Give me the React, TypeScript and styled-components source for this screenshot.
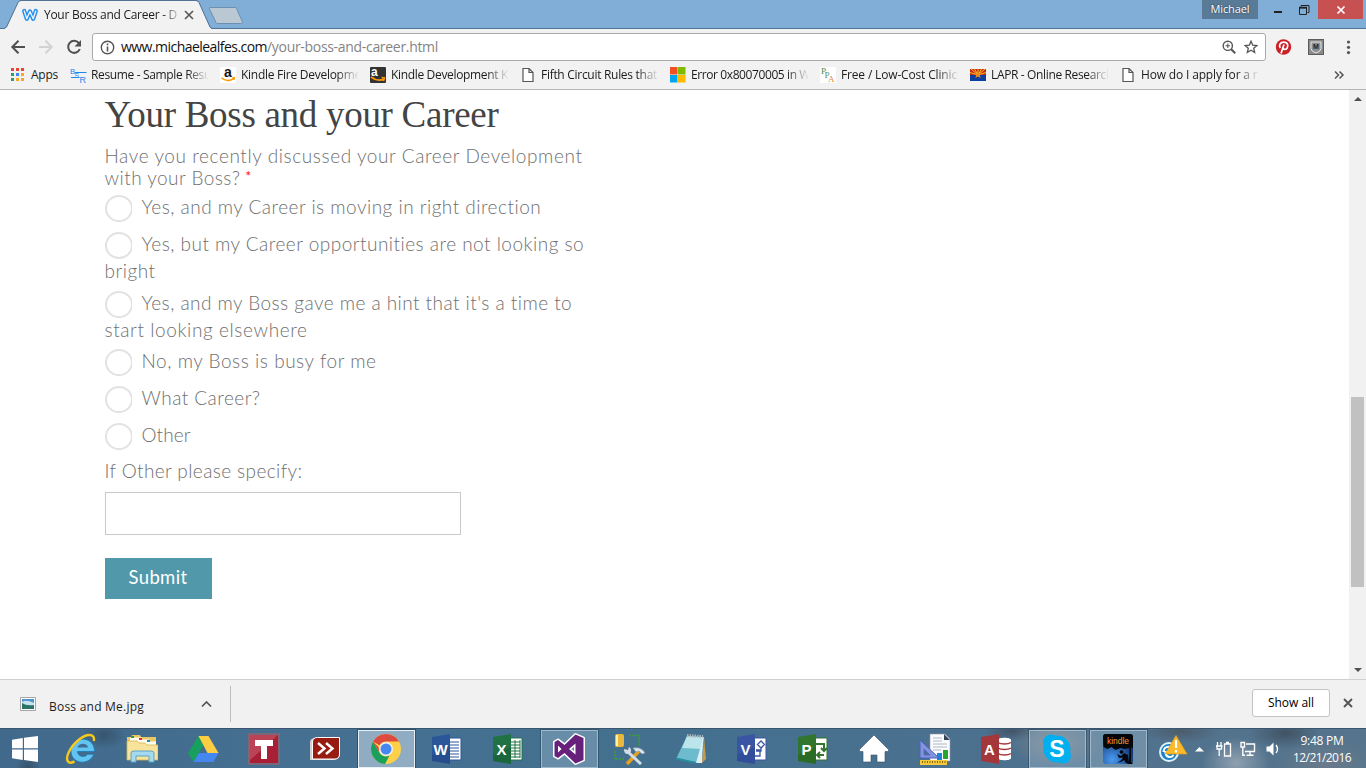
import React, { useLayoutEffect, useRef, useState } from 'react';
import styled, { createGlobalStyle, css } from 'styled-components';

const Global = createGlobalStyle`
  *, *::before, *::after { box-sizing: border-box; }
  body { margin: 0; background: #fff; overflow: hidden; }
`;

const uiFont = '"Open Sans", "Noto Sans", sans-serif';
const bodyFont = 'Lato, "Open Sans", sans-serif';
const iconFont = '"Liberation Sans", sans-serif';

/* ---------- text whose tracking is adjusted to a measured width ---------- */

const Track = styled.span`
  display: inline-block;
  white-space: pre;
`;

function Fit({ w, children }: { w: number; children: string }) {
  const ref = useRef<HTMLSpanElement>(null);
  const [gap, setGap] = useState(0);
  useLayoutEffect(() => {
    if (ref.current) {
      const natural = ref.current.getBoundingClientRect().width - gap * children.length;
      setGap((w - natural) / children.length);
    }
  }, [w, children]);
  return (
    <Track ref={ref} style={{ letterSpacing: `${gap}px` }}>
      {children}
    </Track>
  );
}

/* ---------- window ---------- */

const Screen = styled.div`
  width: 1366px;
  height: 768px;
  display: flex;
  flex-direction: column;
  overflow: hidden;
  background: #fff;
  font-family: ${uiFont};
  font-size: 12px;
  color: #1c1c1c;
  svg { display: block; flex: none; }
`;

const TitleBar = styled.header`
  height: 29px;
  flex: none;
  display: flex;
  align-items: flex-start;
  background: #80aed6;
  border-bottom: 1px solid #4e7195;
`;

const Tab = styled.div`
  position: relative;
  width: 208px;
  height: 29px;
  margin-left: 4px;
  display: flex;
  align-items: center;
  padding: 1px 0 0 18px;
`;

const TabShape = styled.svg`
  position: absolute;
  left: 0;
  top: 0;
`;

const TabTitle = styled.div`
  position: relative;
  width: 134px;
  margin-left: 6px;
  overflow: hidden;
  line-height: 18px;
  mask-image: linear-gradient(to right, #000 118px, transparent 138px);
`;

const Above = styled.div`
  position: relative;
`;

const NewTab = styled.div`
  margin: 6px auto 0 -4px;
`;

const Profile = styled.div`
  width: 56px;
  height: 19px;
  background: #5a7b97;
  color: #fff;
  font-size: 11px;
  line-height: 18px;
  text-align: center;
  text-shadow: 0 0 2px #203040;
`;

const WindowButton = styled.div<{ $close?: boolean; $w: number }>`
  width: ${p => p.$w}px;
  height: 19px;
  display: flex;
  align-items: center;
  justify-content: center;
  background: ${p => (p.$close ? '#c75050' : 'transparent')};
  margin-right: ${p => (p.$close ? 3 : 0)}px;
`;

const RestoreButton = styled(WindowButton)`
  justify-content: flex-start;
`;

const Toolbar = styled.div`
  height: 32px;
  flex: none;
  display: flex;
  align-items: center;
  padding: 4px 0 0 10px;
  background: #f2f2f2;
`;

const ToolIcon = styled.div<{ $gap: number }>`
  margin-right: ${p => p.$gap}px;
`;

const Omnibox = styled.div`
  width: 1174px;
  height: 28px;
  display: flex;
  align-items: center;
  padding: 0 7px;
  background: #fff;
  border: 1px solid #a9a9a9;
  border-radius: 3px;
  font-size: 14px;
  color: #111;
`;

const Url = styled.div`
  display: flex;
  flex: 1;
  margin-left: 6px;
  line-height: 20px;
`;

const Path = styled.span`
  color: #848484;
`;

const Bookmarks = styled.nav`
  height: 29px;
  flex: none;
  display: flex;
  align-items: center;
  padding-left: 10px;
  background: #f2f2f2;
  border-bottom: 1px solid #b6b6b6;
`;

const AppsLink = styled.div`
  width: 60px;
  display: flex;
  align-items: center;
  gap: 7px;
  line-height: 18px;
`;

const Bookmark = styled.div`
  width: 150px;
  height: 18px;
  display: flex;
  align-items: center;
  gap: 5px;
  line-height: 18px;
`;

const BookmarkIcon = styled.div`
  width: 16px;
`;

const BookmarkName = styled.div`
  width: 117px;
  overflow: hidden;
  mask-image: linear-gradient(to right, #000 96px, transparent 118px);
`;

/* ---------- page ---------- */

const Viewport = styled.div`
  height: 589px;
  flex: none;
  display: flex;
  justify-content: space-between;
`;

const Form = styled.main`
  width: 600px;
  padding: 3px 0 0 104.5px;
  font-family: ${bodyFont};
  font-size: 19px;
  font-weight: 300;
  color: #707070;
`;

const Heading = styled.h1`
  margin: 0;
  height: 52px;
  font: 400 37px/43px "Liberation Serif", serif;
  color: #444;
`;

const Line = styled.div`
  height: 22px;
  line-height: 22px;
  display: flex;
`;

const Required = styled.span`
  margin-left: 5px;
  font-size: 13px;
  font-weight: 700;
  line-height: 19px;
  color: #f33;
`;

const Options = styled.div`
  margin-top: 6px;
`;

const Option = styled.div`
  padding-bottom: 9px;
`;

const OptionRow = styled.label`
  height: 28px;
  display: flex;
  gap: 10px;
  line-height: 24px;
`;

const Wrapped = styled.div`
  height: 21.5px;
  line-height: 22px;
`;

const RadioBox = styled.span`
  width: 27px;
  height: 28px;
  flex: none;
  overflow: hidden;
`;

const Radio = styled.span`
  display: block;
  width: 28px;
  height: 27px;
  border: 2px solid #e2e2e2;
  border-radius: 50%;
  background: #fff;
`;

const TextInput = styled.div`
  width: 356px;
  height: 43px;
  margin-top: 10px;
  border: 1px solid #c9c9c9;
  background: #fff;
`;

const Submit = styled.button`
  display: block;
  width: 107px;
  height: 41px;
  margin-top: 23px;
  padding: 0 0 3px;
  border: 0;
  background: #5199aa;
  color: #fff;
  font: 400 18.5px/38px ${bodyFont};
`;

const Scrollbar = styled.div`
  width: 17px;
  display: flex;
  flex-direction: column;
  align-items: center;
  background: #f1f1f1;
`;

const Arrow = styled.div<{ $down?: boolean }>`
  width: 0;
  height: 0;
  margin: ${p => (p.$down ? 'auto 0 7px' : '7px 0 0')};
  border: 4px solid transparent;
  ${p =>
    p.$down
      ? css`border-top-color: #505050; border-bottom: 0;`
      : css`border-bottom-color: #505050; border-top: 0;`}
`;

const Thumb = styled.div`
  width: 13px;
  height: 190px;
  margin-top: 296px;
  background: #c1c1c1;
`;

/* ---------- download shelf ---------- */

const Shelf = styled.div`
  height: 49px;
  flex: none;
  display: flex;
  align-items: center;
  background: #f1f1f1;
  border-top: 1px solid #d0d0d0;
`;

const Download = styled.div`
  width: 231px;
  height: 36px;
  display: flex;
  align-items: center;
  padding: 0 18px 0 20px;
  border-right: 1px solid #bdbdbd;
`;

const FileName = styled.div`
  flex: 1;
  margin: 5px 0 0 13px;
  line-height: 18px;
`;

const ShowAll = styled.button`
  width: 78px;
  height: 28px;
  margin: 0 13px 2px auto;
  padding: 0;
  border: 1px solid #c3c3c3;
  border-radius: 3px;
  background: #fff;
  color: #000;
  font: 500 12px/24px ${uiFont};
`;

const ShelfClose = styled.div`
  margin: 0 13px 2px 0;
`;

/* ---------- task bar ---------- */

const TaskBar = styled.footer`
  height: 40px;
  flex: none;
  display: flex;
  align-items: center;
  border-top: 1px solid #3a566e;
  background:
    radial-gradient(ellipse 22px 14px at 104px 6px, rgba(40, 58, 72, 0.45), transparent),
    radial-gradient(ellipse 12px 14px at 28px 38px, rgba(40, 58, 72, 0.5), transparent),
    radial-gradient(ellipse 45px 24px at 1055px 14px, rgba(126, 130, 134, 0.9), transparent),
    radial-gradient(ellipse 28px 10px at 1012px 2px, rgba(60, 66, 76, 0.6), transparent),
    radial-gradient(ellipse 34px 26px at 1236px 34px, rgba(150, 166, 180, 0.9), transparent),
    radial-gradient(ellipse 36px 16px at 1285px 4px, rgba(58, 72, 86, 0.75), transparent),
    radial-gradient(ellipse 40px 12px at 1180px 2px, rgba(74, 85, 96, 0.75), transparent),
    radial-gradient(ellipse 50px 24px at 1325px 34px, rgba(110, 124, 138, 0.85), transparent),
    linear-gradient(to right, #41698b 0, #457092 300px, #44708f 700px, #4c718f 1000px, #56748c 1366px);
`;

const Start = styled.div`
  width: 53px;
  padding-left: 12px;
`;

const Task = styled.div<{ $state?: 'open' | 'active' }>`
  width: 57px;
  height: 38px;
  margin-right: 4px;
  padding-right: 1px;
  display: flex;
  align-items: center;
  justify-content: center;
  border: 1px solid transparent;
  ${p => p.$state === 'open' && css`
    border-color: rgba(205, 220, 232, 0.55);
    background: rgba(170, 195, 215, 0.35);
    box-shadow: 0 0 0 1px rgba(35, 60, 82, 0.5);
  `}
  ${p => p.$state === 'active' && css`
    border-color: #e8eff5;
    background: rgba(195, 212, 226, 0.6);
    box-shadow: 0 0 0 1px rgba(35, 60, 82, 0.6);
  `}
`;

const Tray = styled.div`
  flex: 1;
  display: flex;
  align-items: center;
  padding-left: 7px;
`;

const TrayItem = styled.div<{ $w: number }>`
  width: ${p => p.$w}px;
`;

const Clock = styled.div`
  width: 62px;
  margin-left: 2px;
  text-align: center;
  font-size: 12px;
  line-height: 17px;
  color: #fff;
`;

const ClockLine = styled.div``;

/* ---------- drawings ---------- */

const PageIcon = () => (
  <svg width="16" height="16" viewBox="0 0 16 16" fill="#fff" stroke="#555" strokeWidth="1.2">
    <path d="M3 1.5h6l4 4v9H3z M9 1.5v4h4" />
  </svg>
);

const bookmarks: { name: string; w: number; icon: React.ReactNode }[] = [
  {
    name: 'Resume - Sample Resu', w: 120,
    icon: (
      <svg width="17" height="16" viewBox="0 0 17 16" fill="#1e88f0" fontFamily={iconFont}>
        <path d="M5 5.5h11.500M1 10.500h8.500" stroke="#1e88f0" strokeWidth="1" />
        <text x="0" y="6.500" fontSize="8">B</text>
        <text x="4.500" y="11" fontSize="7">S</text>
        <text x="9.500" y="15.500" fontSize="9">R</text>
      </svg>
    ),
  },
  {
    name: 'Kindle Fire Developme', w: 120,
    icon: (
      <svg width="16" height="16" viewBox="0 0 16 16">
        <rect width="16" height="16" rx="2" fill="#fff" />
        <text x="4" y="10" fontSize="14" fontWeight="700" fill="#111" fontFamily={iconFont}>a</text>
        <path d="M1.500 10.800c3.500 3.300 8.500 3.500 12 .8M12.300 10.900l2-.2-.5 2.200" fill="none" stroke="#f90" strokeWidth="1.500" />
      </svg>
    ),
  },
  {
    name: 'Kindle Development K', w: 117,
    icon: (
      <svg width="16" height="16" viewBox="0 0 16 16">
        <rect width="16" height="16" rx="1" fill="#333" />
        <text x="1" y="8.500" fontSize="12" fontWeight="700" fill="#fff" fontFamily={iconFont}>a</text>
        <path d="M1 10c4 3 9 4 13 2M11.500 10.500l3 .5-1 3" fill="none" stroke="#f90" strokeWidth="1.600" />
      </svg>
    ),
  },
  { name: 'Fifth Circuit Rules that', w: 116, icon: <PageIcon /> },
  {
    name: 'Error 0x80070005 in W', w: 119,
    icon: (
      <svg width="16" height="16" viewBox="0 0 16 16">
        <path fill="#f25022" d="M0 0h7.500v7.500H0z" />
        <path fill="#7fba00" d="M8 0h7.500v7.500H8z" />
        <path fill="#00a4ef" d="M0 8h7.500v7.500H0z" />
        <path fill="#ffb900" d="M8 8h7.500v7.500H8z" />
      </svg>
    ),
  },
  {
    name: 'Free / Low-Cost Clinic', w: 116,
    icon: (
      <svg width="16" height="16" viewBox="0 0 16 16" fontFamily="Liberation Serif, serif">
        <path fill="#fff" d="M0 0h16v16H0z" />
        <text x="1" y="7" fontSize="9" fill="#4d8a50">P</text>
        <text x="4.500" y="11" fontSize="9" fill="#5c9560">P</text>
        <text x="8" y="14.500" fontSize="9" fill="#e58a35">A</text>
      </svg>
    ),
  },
  {
    name: 'LAPR - Online Research', w: 122,
    icon: (
      <svg width="16" height="16" viewBox="0 0 16 16">
        <path fill="#c22a18" d="M0 2h16v6H0z" />
        <path stroke="#fb2" strokeWidth="1" d="M8 8L1 2M8 8L4.500 2M8 8l7-6M8 8l3.500-6M8 8L0 5.500M8 8l8-2.500M8 8V2" />
        <path fill="#0c3f9e" d="M0 8h16v6H0z" />
        <path fill="#e88a20" d="M8 4l1.200 2.600 2.800.1-2.200 1.600.8 2.700L8 9.500 5.400 11l.8-2.700L4 6.700l2.800-.1z" />
      </svg>
    ),
  },
  { name: 'How do I apply for a n', w: 119, icon: <PageIcon /> },
];

const AppsGrid = () => (
  <svg width="14" height="14" viewBox="0 0 14 14">
    {['#ea4335', '#ea4335', '#ea4335', '#2ca05a', '#4285f4', '#f9a825', '#2ca05a', '#f9a825', '#f9a825'].map((c, i) => (
      <rect key={i} x={1 + (i % 3) * 5} y={Math.floor(i / 3) * 5} width="3" height="3" fill={c} />
    ))}
  </svg>
);

const Letter = ({ children }: { children: string }) => (
  <text x="9.500" y="21.500" fontSize="15" fontWeight="700" textAnchor="middle" fill="#fff" fontFamily={iconFont}>{children}</text>
);

const Office = ({ letter, color, dark, children }: { letter: string; color: string; dark: string; children: React.ReactNode }) => (
  <svg width="32" height="32" viewBox="0 0 32 32">
    <path d="M17 5h13v22H17z" fill="#fff" stroke={color} strokeWidth="1" />
    {children}
    <path d="M1 4l18-3v30L1 28z" fill={color} />
    <path d="M1 22l18-8v17L1 28z" fill={dark} opacity=".35" />
    <Letter>{letter}</Letter>
  </svg>
);

const IE = () => (
  <svg width="32" height="32" viewBox="0 0 32 32">
    <path d="M29.500 18.500H12.500c.3 5.500 7.500 6.500 10 2.800h6.300C24.500 33 5.500 31.500 6 17.500 6.500 3 29.500 1.500 29.500 18.500z" fill="#62c5f1" stroke="#1d79b8" strokeWidth=".8" />
    <path d="M12.500 14.500c.8-5 10-5 10.500 0z" fill="#3f6f93" />
    <path d="M28.800 8C30.500 .5 22 0 13.500 7 4.500 14.500-.5 25.500 3.500 29c1.500 1.200 4 .6 6-.6" fill="none" stroke="#f8c81c" strokeWidth="2.400" />
  </svg>
);

const Explorer = () => (
  <svg width="32" height="32" viewBox="0 0 32 32">
    <path d="M1 4h4l1-2h8l1 2h15v23H1z" fill="#e9c765" />
    <path d="M4 4.500h11v5H4zM12 6.500h11v5H12zM20 8.500h10v5H20z" fill="#fffdf0" />
    <path d="M5 3h3v2H5z" fill="#2c9c38" /><path d="M13 5h3v2h-3z" fill="#d33" /><path d="M21 7h3v2h-3z" fill="#28c" />
    <path d="M1 8h10l2 2h6l2 2h11v15H1z" fill="#f7e39a" stroke="#d9b44e" strokeWidth=".8" />
    <path d="M5 29V20q0-2 3-2h17q3 0 3 2v9h-5v-6H10v6z" fill="#a4d9ee" stroke="#5aa5c8" strokeWidth="1" />
  </svg>
);

const Drive = () => (
  <svg width="32" height="32" viewBox="0 0 32 32">
    <path d="M11.500 3L1 20l5.500 9L16.500 12z" fill="#17a05d" />
    <path d="M11.500 3h10L31.500 20h-11z" fill="#ffcd42" />
    <path d="M11.800 20h19.700l-5 9H6.500z" fill="#4587f0" />
  </svg>
);

const Trend = () => (
  <svg width="32" height="32" viewBox="0 0 32 32">
    <path d="M1 1h30v30H1z" fill="#a82035" stroke="#7d6678" strokeWidth="2" />
    <path d="M2 2h28L2 27z" fill="#c25464" opacity=".7" />
    <path d="M7 7h18v6h-6v13h-6V13H7z" fill="#fff" />
  </svg>
);

const Remote = () => (
  <svg width="32" height="32" viewBox="0 0 32 32">
    <path d="M1 9q0-3 4-4h26v16q0 5-6 6H1z" fill="#d4cfd0" />
    <path d="M3.500 9q0-4.500 5-4.500h22V21q0 5-5 5h-22z" fill="#971b10" stroke="#fff" strokeWidth="1" />
    <path d="M9 10l6.500 5.500L9 21M17 10l6.500 5.500L17 21" fill="none" stroke="#fff" strokeWidth="2.400" />
  </svg>
);

const Chrome = () => (
  <svg width="32" height="32" viewBox="0 0 32 32">
    <circle cx="16" cy="16" r="15" fill="#fdd047" />
    <path d="M3 8.500A15 15 0 0 1 29 8.500H16a7.500 7.500 0 0 0-6.500 3.800z" fill="#dd4b3e" />
    <path d="M3 8.500l6.500 11.200A7.500 7.500 0 0 0 19.500 22.600L15 31A15 15 0 0 1 3 8.500z" fill="#1ba05c" />
    <path d="M3 8.500L9.500 19.700 8.500 14z" fill="#dd4b3e" />
    <circle cx="16" cy="16" r="7" fill="#f1f1f1" /><circle cx="16" cy="16" r="5.500" fill="#4688f1" />
  </svg>
);

const VisualStudio = () => (
  <svg width="34" height="34" viewBox="0 0 34 34">
    <g fillRule="evenodd" strokeLinejoin="round">
      <path id="vs" d="M23.500 2.500L31.500 6v22l-8 3.500L12.500 21 6 26l-3.500-2V10L6 8l6.500 5zM23.500 11.500L17 17l6.500 5.500zM6 13.500v7L9.500 17z" fill="#68217a" stroke="#fff" strokeWidth="3" />
      <path d="M23.500 2.500L31.500 6v22l-8 3.500L12.500 21 6 26l-3.500-2V10L6 8l6.500 5zM23.500 11.500L17 17l6.500 5.500zM6 13.500v7L9.500 17z" fill="#68217a" />
    </g>
  </svg>
);

const Tools = () => (
  <svg width="32" height="32" viewBox="0 0 32 32">
    <path d="M15 2.500h10v10M1 18v8h10" fill="none" stroke="#3f9a3a" strokeWidth="1.500" strokeDasharray="2 1" />
    <rect x="1" y="1" width="9" height="13" rx="2" fill="#e9b73b" /><path d="M3 2v11" stroke="#fff0a8" strokeWidth="2" />
    <path d="M13 31L25 18" stroke="#e8a020" strokeWidth="3.500" />
    <path d="M19 15c6-1 10 1 12 5l-3 1-3-3-3 1z" fill="#dbe4ea" stroke="#8797a3" strokeWidth=".6" />
    <path d="M14 19l13 12" stroke="#d4dde4" strokeWidth="3" />
    <path d="M10 16l4 1 1-3c3 2 3 6-1 7-3 0-4-2-4-5z" fill="#d4dde4" />
  </svg>
);

const Notepad = () => (
  <svg width="32" height="32" viewBox="0 0 32 32">
    <path d="M29 4l2 22-4 4z" fill="#c49a4a" />
    <path d="M12 3l17 1-3 26-25-4z" fill="#6cbccd" />
    <path d="M12 3l17 1-2 12-20-1z" fill="#c9ebf0" opacity=".85" />
    <path d="M28 5l-7 25h6z" fill="#dfeef2" />
    <path d="M1 25.500l20 4.500" stroke="#2b8ba0" strokeWidth="2" />
    <path d="M12 2.500l16 1" stroke="#a9b5b8" strokeWidth="3" strokeDasharray="1.500 1" />
  </svg>
);

const Home = () => (
  <svg width="32" height="32" viewBox="0 0 32 32">
    <path d="M16 2L1 17l1.500 1.500H5V29h8v-7h6v7h8V18.500h2.500L31 17z" fill="#fff" stroke="#36526a" strokeWidth=".6" />
  </svg>
);

const ReportBuilder = () => (
  <svg width="32" height="32" viewBox="0 0 32 32">
    <path d="M11 1h15l5 5v22H11z" fill="#fbfcfe" stroke="#99a" strokeWidth=".6" /><path d="M25 1v6h6z" fill="#34435a" />
    <path d="M14 5h9M14 8h9M14 11h14M14 14h14M14 17h8" stroke="#aeb6c2" />
    <path d="M18 20h5v7h-5z" fill="#1986dc" /><path d="M24 17h5v9h-5z" fill="#27a52d" />
    <path d="M1 7v18h19z" fill="#8394df" stroke="#4b5fbe" /><path d="M5 16v6h6z" fill="#4a6c94" stroke="#5668c0" />
    <path d="M1 27h27v5H1z" fill="#f6c93d" /><path d="M3 29h24" stroke="#84640e" strokeWidth="2" strokeDasharray="1 1.500" />
  </svg>
);

const Skype = () => (
  <svg width="32" height="32" viewBox="0 0 32 32">
    <circle cx="16" cy="16" r="13.500" fill="#00aff0" /><circle cx="10" cy="9.500" r="8" fill="#00aff0" /><circle cx="22" cy="22.500" r="8" fill="#00aff0" />
    <text x="16" y="24" textAnchor="middle" fontFamily={iconFont} fontWeight="700" fontSize="23" fill="#fff">S</text>
  </svg>
);

const Kindle = () => (
  <svg width="32" height="32" viewBox="0 0 32 32">
    <defs>
      <radialGradient id="kindleSky" cx=".3" cy=".85" r=".8">
        <stop offset="0" stopColor="#4a9af0" /><stop offset="1" stopColor="#0d2c68" />
      </radialGradient>
    </defs>
    <rect x="1" y="1" width="30" height="30" rx="3" fill="url(#kindleSky)" />
    <path d="M1 4q0-3 3-3h24q3 0 3 3v11l-2-1v15l2 2h-6l2-2 .500-14-5 1-4-1-5 2-4-3-4 2-4-2z" fill="#05070b" />
    <circle cx="19.500" cy="19" r="1.800" fill="#05070b" />
    <path d="M27 30l-1-8-4-2-3 3-4-2 2 4 4-.5-2 3-4 2 4-.5 3-2 2 3z" fill="#05070b" />
    <text x="16" y="10.500" textAnchor="middle" fontFamily={iconFont} fontSize="8.500" fill="#f29a2a">kindle</text>
  </svg>
);

const tasks: { icon: React.ReactNode; state?: 'open' | 'active' }[] = [
  { icon: <IE /> },
  { icon: <Explorer /> },
  { icon: <Drive /> },
  { icon: <Trend /> },
  { icon: <Remote /> },
  { icon: <Chrome />, state: 'active' },
  { icon: <Office letter="W" color="#2b579a" dark="#1d3f7a"><path d="M19 9h9M19 12h9M19 15h9M19 18h9M19 21h9M19 24h9" stroke="#2b579a" /></Office> },
  { icon: <Office letter="X" color="#207245" dark="#12502d"><path d="M19 9h9M19 12h9M19 15h9M19 18h9M19 21h9M19 24h9M23 7v18M28 7v18" stroke="#207245" /></Office> },
  { icon: <VisualStudio />, state: 'open' },
  { icon: <Tools /> },
  { icon: <Notepad /> },
  { icon: <Office letter="V" color="#3955a3" dark="#26408a"><path d="M25 8l3.500 3.500L25 15l-3.500-3.500zM25 15v3h-5M20 17h4v6h-5" stroke="#3955a3" fill="none" strokeWidth="1.300" /></Office> },
  { icon: <Office letter="P" color="#31752f" dark="#1f5a1e"><path d="M18 11h9v6M24 15l3 3 3-3M27 22h-7M23 19l-3 3 3 3" stroke="#31752f" fill="none" strokeWidth="2" /></Office> },
  { icon: <Home /> },
  { icon: <ReportBuilder /> },
  {
    icon: (
      <svg width="32" height="32" viewBox="0 0 32 32">
        <path d="M18 7c0-3 13-3 13 0v18c0 3-13 3-13 0z" fill="#fff" />
        <path d="M18 9.500c3 2 10 2 13 0M18 15c3 2 10 2 13 0M18 20.500c3 2 10 2 13 0" fill="none" stroke="#a4373a" strokeWidth="1.500" />
        <path d="M1 4l18-3v30L1 28z" fill="#a4373a" />
        <Letter>A</Letter>
      </svg>
    ),
  },
  { icon: <Skype />, state: 'open' },
  { icon: <Kindle />, state: 'open' },
];

const options: { text: string; w: number; rest?: string; restW?: number }[] = [
  { text: 'Yes, and my Career is moving in right direction', w: 400 },
  { text: 'Yes, but my Career opportunities are not looking so', w: 443, rest: 'bright', restW: 51 },
  { text: "Yes, and my Boss gave me a hint that it's a time to", w: 431, rest: 'start looking elsewhere', restW: 203 },
  { text: 'No, my Boss is busy for me', w: 235 },
  { text: 'What Career?', w: 119 },
  { text: 'Other', w: 49 },
];

export default function App() {
  return (
    <Screen>
      <Global />
      <TitleBar>
        <Tab>
          <TabShape width="208" height="29" viewBox="0 0 208 29">
            <path d="M0 29L2.500 27.500 14 2.500Q15 1 17 1H192Q194 1 195 2.500L206 27.500 208 29z" fill="#f2f2f2" />
            <path d="M0 28.500L2.500 27 14 2.500Q15 .5 17 .5H192Q194 .5 195 2.500L206 27 208 28.500" fill="none" stroke="#4e7195" />
          </TabShape>
          <Above>
            <svg width="16" height="16" viewBox="0 0 16 16" fill="none" strokeLinejoin="round" strokeLinecap="round">
              <path d="M2.200 4l2.600 7.800L8 4.500l3.200 7.300L13.800 4" stroke="#2990ea" strokeWidth="4.200" />
              <path d="M2.200 4l2.600 7.800L8 4.500l3.200 7.300L13.800 4" stroke="#eef6fd" strokeWidth="1.300" />
            </svg>
          </Above>
          <TabTitle><Fit w={133}>Your Boss and Career - D</Fit></TabTitle>
          <Above>
            <svg width="18" height="10" viewBox="0 0 18 10"><path d="M7 1l8 8M15 1L7 9" stroke="#555" strokeWidth="1.600" /></svg>
          </Above>
        </Tab>
        <NewTab>
          <svg width="36" height="19" viewBox="0 0 36 19">
            <path d="M2 1.500h25q1 0 1.500 1L34.500 16q0 1.500-1 1.500H10q-1.500 0-2-1L1.500 3Q1 1.500 2 1.500z" fill="#bac8d3" stroke="#6b90b2" />
          </svg>
        </NewTab>
        <Profile><Fit w={39}>Michael</Fit></Profile>
        <WindowButton $w={40}><svg width="10" height="9"><path d="M1 6h8v2H1z" fill="#222" /></svg></WindowButton>
        <RestoreButton $w={20}>
          <svg width="12" height="12" viewBox="0 0 12 12" fill="none" stroke="#222">
            <path d="M3 2.500V1.500h8v7h-1.500" /><path d="M1.500 4h7v6.500h-7z" /><path d="M1 3.500h8" strokeWidth="1.500" />
          </svg>
        </RestoreButton>
        <WindowButton $w={45} $close><svg width="10" height="10"><path d="M1.500 1.500l7 7M8.500 1.500l-7 7" stroke="#fff" strokeWidth="1.700" /></svg></WindowButton>
      </TitleBar>

      <Toolbar>
        <ToolIcon $gap={12}><svg width="16" height="16" viewBox="0 0 16 16" fill="none" stroke="#505050" strokeWidth="2"><path d="M15 8H3M8.500 1.800L2.300 8l6.200 6.200" /></svg></ToolIcon>
        <ToolIcon $gap={12}><svg width="16" height="16" viewBox="0 0 16 16" fill="none" stroke="#d2d2d2" strokeWidth="2"><path d="M1 8h12M7.500 1.800L13.700 8l-6.200 6.200" /></svg></ToolIcon>
        <ToolIcon $gap={10}><svg width="16" height="16" viewBox="0 0 16 16"><path d="M12.800 4A6 6 0 1 0 13.800 10" fill="none" stroke="#505050" strokeWidth="2" /><path d="M15 1v6.500H8.500z" fill="#505050" /></svg></ToolIcon>
        <Omnibox>
          <svg width="15" height="15" viewBox="0 0 15 15"><circle cx="7.500" cy="7.500" r="6.200" fill="none" stroke="#555" strokeWidth="1.400" /><path d="M7.500 6.500v5M7.500 3.500v1.700" stroke="#555" strokeWidth="1.600" /></svg>
          <Url>
            <Fit w={146}>www.michaelealfes.com</Fit>
            <Path><Fit w={171}>/your-boss-and-career.html</Fit></Path>
          </Url>
          <ToolIcon $gap={8}><svg width="14" height="14" viewBox="0 0 14 14" fill="none" stroke="#555"><circle cx="5.800" cy="5.800" r="4.600" strokeWidth="1.400" /><path d="M9.200 9.200l4 4" strokeWidth="2" /><path d="M3.500 5.800h4.600M5.800 3.500v4.600" strokeWidth="1.100" /></svg></ToolIcon>
          <svg width="14" height="14" viewBox="0 0 14 14"><path d="M7 1.200l1.700 3.900 4.200.4-3.200 2.800 1 4.200L7 10.300l-3.700 2.200 1-4.200L1.100 5.500l4.200-.4z" fill="none" stroke="#555" strokeWidth="1.300" /></svg>
        </Omnibox>
        <ToolIcon $gap={0}>
          <svg width="34" height="18" viewBox="0 0 34 18">
            <circle cx="17.500" cy="9" r="7.700" fill="#ca2127" />
            <path d="M15 15.500L18 6.500M14.300 10C12.500 7.500 14 4.200 17.700 4.200c4.300 0 4.800 3.600 3.300 6-1.200 1.700-3.400 1.500-3.900.2" fill="none" stroke="#fff" strokeWidth="1.700" />
          </svg>
        </ToolIcon>
        <ToolIcon $gap={18}>
          <svg width="24" height="16" viewBox="0 0 24 16">
            <rect x="8.500" y=".5" width="15" height="15" fill="#8a8a8a" stroke="#5d5d5d" />
            <path d="M11 3h10v6.500q0 3-5 4.500-5-1.500-5-4.500z" fill="#8f8f8f" stroke="#e6e6e6" />
            <text x="16" y="10" textAnchor="middle" fontSize="7" fontWeight="700" fill="#222" fontFamily={iconFont}>M</text>
          </svg>
        </ToolIcon>
        <svg width="14" height="16" viewBox="0 0 14 16" fill="#555"><circle cx="6.500" cy="3" r="1.600" /><circle cx="6.500" cy="8.300" r="1.600" /><circle cx="6.500" cy="13.600" r="1.600" /></svg>
      </Toolbar>

      <Bookmarks>
        <AppsLink><AppsGrid /><Fit w={27}>Apps</Fit></AppsLink>
        {bookmarks.map(b => (
          <Bookmark key={b.name}>
            <BookmarkIcon>{b.icon}</BookmarkIcon>
            <BookmarkName><Fit w={b.w}>{b.name}</Fit></BookmarkName>
          </Bookmark>
        ))}
        <svg width="76" height="10" viewBox="0 0 76 10"><path d="M65 1.500L68.500 5 65 8.500M69.500 1.500L73 5l-3.500 3.500" fill="none" stroke="#555" strokeWidth="1.500" /></svg>
      </Bookmarks>

      <Viewport>
        <Form>
          <Heading><Fit w={394}>Your Boss and your Career</Fit></Heading>
          <Line><Fit w={478}>Have you recently discussed your Career Development</Fit></Line>
          <Line><Fit w={136}>with your Boss?</Fit><Required>*</Required></Line>
          <Options>
            {options.map(o => (
              <Option key={o.text}>
                <OptionRow>
                  <RadioBox><Radio /></RadioBox>
                  <Fit w={o.w}>{o.text}</Fit>
                </OptionRow>
                {o.rest && <Wrapped><Fit w={o.restW ?? 0}>{o.rest}</Fit></Wrapped>}
              </Option>
            ))}
          </Options>
          <Line><Fit w={198}>If Other please specify:</Fit></Line>
          <TextInput />
          <Submit><Fit w={59}>Submit</Fit></Submit>
        </Form>
        <Scrollbar><Arrow /><Thumb /><Arrow $down /></Scrollbar>
      </Viewport>

      <Shelf>
        <Download>
          <svg width="16" height="15" viewBox="0 0 16 15">
            <path d="M.5.5h15v13H.5z" fill="#fff" stroke="#a5a5a5" />
            <path d="M2 2h12v5H2z" fill="#4c93d0" /><path d="M2 5q4-3 12 1v4H2z" fill="#c5e3ef" /><path d="M2 6q4 3 12 2v4H2z" fill="#2c7468" />
          </svg>
          <FileName><Fit w={95}>Boss and Me.jpg</Fit></FileName>
          <svg width="11" height="8" viewBox="0 0 11 8"><path d="M1 6.500l4.500-4.500L10 6.500" fill="none" stroke="#555" strokeWidth="1.700" /></svg>
        </Download>
        <ShowAll><Fit w={46}>Show all</Fit></ShowAll>
        <ShelfClose><svg width="10" height="10"><path d="M1 1l8 8M9 1L1 9" stroke="#555" strokeWidth="1.900" /></svg></ShelfClose>
      </Shelf>

      <TaskBar>
        <Start>
          <svg width="26" height="26" viewBox="0 0 26 26" fill="#fff"><path d="M0 3.700L10.800 2v10.300H0zM12 1.800L26 0v12.300H12zM0 13.600h10.800V24L0 22.300zM12 13.600h14V26l-14-1.900z" /></svg>
        </Start>
        {tasks.map((t, i) => <Task key={i} $state={t.state}>{t.icon}</Task>)}
        <Tray>
          <TrayItem $w={37}>
            <svg width="30" height="30" viewBox="0 0 30 30">
              <circle cx="11" cy="18" r="9" fill="#1681c6" stroke="#dff1fb" strokeWidth="2" />
              <path d="M5.500 18c0-7 10-7 10.500 0H7.500c0 6 6 6 8 3" fill="none" stroke="#fff" strokeWidth="2.200" />
              <path d="M18 1.500L29 20H7z" fill="#fbb829" stroke="#e6a118" strokeWidth=".6" strokeLinejoin="round" />
              <path d="M18 6v8M18 16v2.500" stroke="#fff" strokeWidth="2.200" />
            </svg>
          </TrayItem>
          <TrayItem $w={21}><svg width="9" height="6"><path d="M4.500 1L9 5.500H0z" fill="#fff" /></svg></TrayItem>
          <TrayItem $w={24}>
            <svg width="16" height="18" viewBox="0 0 16 18" fill="none" stroke="#fff" strokeWidth="1.300">
              <path d="M8.500 4h6v12h-6zM10 2.500h3" /><path d="M1.500 2v4M5 2v4M0 6h6.500M1 6v3h4.500V6M3.200 9v7" />
            </svg>
          </TrayItem>
          <TrayItem $w={26}>
            <svg width="16" height="16" viewBox="0 0 16 16" fill="none" stroke="#fff" strokeWidth="1.400">
              <path d="M6 3h8.500v7.500H5M10 10.500V14M6.500 14.300h7M1 1.500h3.500V6H1zM2.800 6v8.300H5" />
            </svg>
          </TrayItem>
          <TrayItem $w={23}>
            <svg width="15" height="16" viewBox="0 0 15 16"><path d="M.5 5.500h3L7.500 1.500v13l-4-4h-3z" fill="#fff" /><path d="M10 4q3 4 0 8" fill="none" stroke="#fff" strokeWidth="1.300" /></svg>
          </TrayItem>
          <Clock>
            <ClockLine><Fit w={43}>9:48 PM</Fit></ClockLine>
            <ClockLine><Fit w={58}>12/21/2016</Fit></ClockLine>
          </Clock>
        </Tray>
      </TaskBar>
    </Screen>
  );
}
